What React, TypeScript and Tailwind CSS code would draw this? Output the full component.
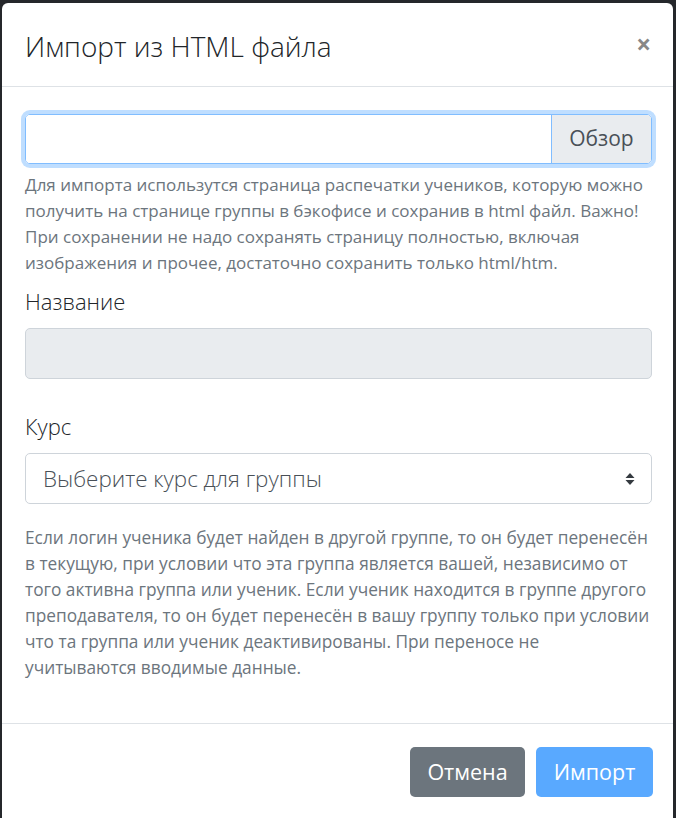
import React from "react";

const font = { fontFamily: '"Open Sans", "Liberation Sans", sans-serif' };

function HelpText({ size, children }: { size: string; children: React.ReactNode }) {
  return <p className={`${size} leading-[26px] text-[#6c757d]`}>{children}</p>;
}

export default function App() {
  return (
    <div
      className="w-[676px] h-[818px] overflow-hidden bg-[#25272b] pl-[2px] pt-[3px]"
      style={font}
    >
      <div className="w-[671px] h-[820px] bg-white rounded-t-[6px] flex flex-col">
        {/* header */}
        <div className="h-[84px] shrink-0 flex items-center justify-between pl-[23px] pr-[22px] border-b border-[#dee2e6]">
          <h5 className="text-[28px] font-light leading-[36px] text-[#212529] pt-[2px]">
            Импорт из HTML файла
          </h5>
          <button className="text-[26px] font-bold leading-none text-[#888] pb-[2px]">
            ×
          </button>
        </div>

        {/* body */}
        <div className="pt-[27px] pl-[23px] pr-[21px] pb-[42px]">
          <div className="flex h-[50px] rounded-[5px] border border-[#80bdff] shadow-[0_0_0_4px_rgba(0,123,255,0.25)] overflow-hidden">
            <div className="flex-1 bg-white" />
            <button className="w-[100px] border-l border-[#80bdff] bg-[#e9ecef] text-[21px] text-[#495057]">
              Обзор
            </button>
          </div>
          <div className="mt-[8px]">
            <HelpText size="text-[17px]">
              Для импорта использутся страница распечатки учеников, которую можно
              получить на странице группы в бэкофисе и сохранив в html файл. Важно!
              При сохранении не надо сохранять страницу полностью, включая
              изображения и прочее, достаточно сохранить только html/htm.
            </HelpText>
          </div>

          <label className="block mt-[10px] text-[22px] font-light leading-[30px] text-[#212529]">
            Название
          </label>
          <div className="mt-[12px] h-[51px] rounded-[5px] border border-[#ced4da] bg-[#e9ecef]" />

          <label className="block mt-[32px] text-[22px] font-light leading-[30px] text-[#212529]">
            Курс
          </label>
          <div className="mt-[12px] h-[51px] rounded-[5px] border border-[#ced4da] bg-white flex items-center justify-between pl-[17px] pr-[16px]">
            <span className="text-[22.4px] font-light text-[#495057]">
              Выберите курс для группы
            </span>
            <svg width="10" height="14" viewBox="0 0 10 14">
              <path d="M5 1 L9.5 6 H0.5 Z" fill="#343a40" />
              <path d="M5 13 L9.5 8 H0.5 Z" fill="#343a40" />
            </svg>
          </div>

          <div className="mt-[21px]">
            <HelpText size="text-[17.3px]">
              Если логин ученика будет найден в другой группе, то он будет перенесён
              в текущую, при условии что эта группа является вашей, независимо от
              того активна группа или ученик. Если ученик находится в группе другого
              преподавателя, то он будет перенесён в вашу группу только при условии
              что та группа или ученик деактивированы. При переносе не
              учитываются вводимые данные.
            </HelpText>
          </div>
        </div>

        {/* footer */}
        <div className="border-t border-[#dee2e6] pt-[23px] pr-[20px] flex justify-end gap-[11px]">
          <button className="h-[50px] w-[115px] rounded-[5px] bg-[#6c757d] text-white text-[21.5px]">
            Отмена
          </button>
          <button className="h-[50px] w-[117px] rounded-[5px] bg-[#59a9ff] text-white text-[21.5px]">
            Импорт
          </button>
        </div>
      </div>
    </div>
  );
}
